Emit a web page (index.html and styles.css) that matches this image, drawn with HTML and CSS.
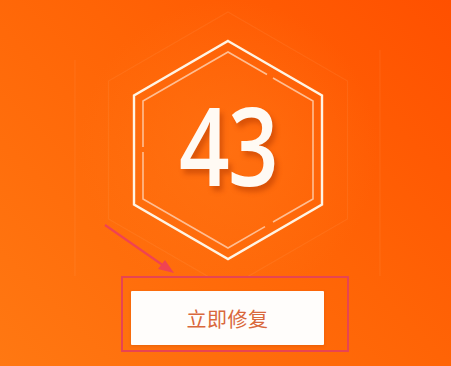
FILE: index.html
```html
<!DOCTYPE html>
<html lang="zh">
<head>
<meta charset="utf-8">
<title>立即修复</title>
<link rel="stylesheet" href="styles.css">
</head>
<body>
<main class="screen">
  <section class="hero">
    <svg class="hex" width="451" height="276" viewBox="0 0 451 276" aria-hidden="true">
      <defs>
        <radialGradient id="glow" cx="50%" cy="50%" r="50%">
          <stop offset="0" stop-color="#ff7a1a" stop-opacity="0.5"/>
          <stop offset="1" stop-color="#ff7a1a" stop-opacity="0"/>
        </radialGradient>
      </defs>
      <circle cx="228" cy="150" r="150" fill="url(#glow)"/>
      <line class="faint" x1="75" y1="60" x2="75" y2="300"/>
      <line class="faint" x1="380" y1="50" x2="380" y2="300"/>
      <polygon class="faint" points="228,12 347.5,81 347.5,219 228,288 108.5,219 108.5,81"/>
      <polygon class="main" points="228,41 322,95.5 322,204.5 228,259 134,204.5 134,95.5"/>
      <g class="inner">
        <polyline points="267,74.5 228,52 143,101 143,147"/>
        <polyline points="143,152 143,199 228,248 265,226.6"/>
        <polyline points="273,222 313,199 313,101 273,78"/>
      </g>
    </svg>
    <div class="score">43</div>
    <svg class="arrow" width="80" height="60" viewBox="0 0 80 60" aria-hidden="true">
      <line x1="5" y1="5" x2="64" y2="46"/>
      <polygon points="74,53 58,49 65,40"/>
    </svg>
  </section>
  <div class="action">
    <button class="fix" type="button">立即修复</button>
  </div>
</main>
</body>
</html>
```
FILE: styles.css
```css
html, body {
  margin: 0;
  padding: 0;
}
body {
  width: 451px;
  height: 366px;
  overflow: hidden;
  background: linear-gradient(225deg, #ff5000 0%, #ff6406 45%, #ff7812 100%);
  font-family: "Noto Sans CJK SC", "Noto Sans", sans-serif;
}
.screen {
  width: 451px;
  height: 366px;
}
.hero {
  position: relative;
  height: 276px;
}
.hex {
  display: block;
}
.faint {
  fill: none;
  stroke: rgba(255, 200, 150, 0.1);
  stroke-width: 1.2;
}
.main {
  fill: none;
  stroke: #fff4e4;
  stroke-width: 2.4;
  stroke-linejoin: miter;
}
.inner polyline {
  fill: none;
  stroke: #ffbe93;
  stroke-width: 1.6;
}
.score {
  position: absolute;
  left: 128px;
  top: 85px;
  width: 200px;
  text-align: center;
  font-family: "Open Sans", "DejaVu Sans", sans-serif;
  font-weight: 600;
  font-size: 108px;
  line-height: 120px;
  color: #fffaf4;
  letter-spacing: -2px;
  transform: scaleX(0.82);
  transform-origin: 50% 50%;
  text-shadow: 4px 5px 6px rgba(170, 50, 0, 0.45);
}
.arrow {
  position: absolute;
  left: 100px;
  top: 220px;
}
.arrow line {
  stroke: #f04352;
  stroke-width: 2.2;
}
.arrow polygon {
  fill: #f04352;
}
.action {
  margin-left: 121px;
  border: 2px solid #e84452;
  padding: 13px 0 0 8px;
  box-sizing: border-box;
  height: 76px;
  width: 228px;
}
.fix {
  display: flex;
  align-items: center;
  justify-content: center;
  width: 193px;
  height: 54px;
  border: 0;
  border-radius: 1px;
  background: #fffdfb;
  color: #d9683c;
  font-family: "Noto Sans CJK SC", "Noto Sans", sans-serif;
  font-size: 20px;
  letter-spacing: 0.5px;
  padding: 0;
  box-shadow: 0 1px 3px rgba(160, 60, 0, 0.25);
}
```
